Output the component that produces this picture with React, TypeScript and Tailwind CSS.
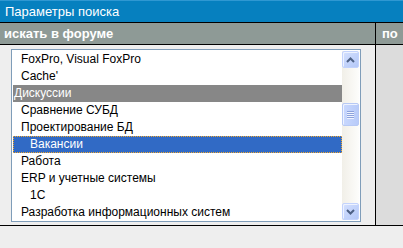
import React from "react";

type Item = { label: string; level: 0 | 1 | 2; kind?: "group" | "selected" };

const items: Item[] = [
  { label: "FoxPro, Visual FoxPro", level: 1 },
  { label: "Cache'", level: 1 },
  { label: "Дискуссии", level: 0, kind: "group" },
  { label: "Сравнение СУБД", level: 1 },
  { label: "Проектирование БД", level: 1 },
  { label: "Вакансии", level: 2, kind: "selected" },
  { label: "Работа", level: 1 },
  { label: "ERP и учетные системы", level: 1 },
  { label: "1C", level: 2 },
  { label: "Разработка информационных систем", level: 1 },
];

function ScrollButton({ dir }: { dir: "up" | "down" }) {
  return (
    <div className="h-[17px] w-full rounded-[2px] border border-[#c3d3fd] bg-gradient-to-br from-[#d4e0fe] to-[#b4c8f8] shadow-[inset_1px_1px_0_#eef3ff] flex items-center justify-center">
      <svg width="9" height="6" viewBox="0 0 9 6">
        {dir === "up" ? (
          <path d="M1 5 L4.5 1.5 L8 5" fill="none" stroke="#4d6185" strokeWidth="2" />
        ) : (
          <path d="M1 1 L4.5 4.5 L8 1" fill="none" stroke="#4d6185" strokeWidth="2" />
        )}
      </svg>
    </div>
  );
}

export default function App() {
  return (
    <div
      className="w-[403px] h-[248px] bg-[#eeeeee] overflow-hidden flex flex-col"
      style={{ fontFamily: '"Liberation Sans", Arial, sans-serif' }}
    >
      <div className="h-[22px] bg-[#0680bf] border-t border-[#2f98d2] text-white text-[13px] leading-[21px] pl-[5px]">
        Параметры поиска
      </div>
      <div className="flex border-y border-black h-[204px]">
        <div className="w-[376px] border-r border-black flex flex-col">
          <div className="h-[22px] bg-[#8e9a96] border-b border-black text-white font-bold text-[13px] leading-[21px] pl-[4px]">
            искать в форуме
          </div>
          <div className="flex-1 bg-[#eeeeee] pt-[4px] pl-[11px]">
            <div className="w-[350px] h-[173px] border border-[#7f9db9] bg-white p-[1px] flex">
              <div className="flex-1 overflow-hidden">
                {items.map((it, i) => {
                  const pad =
                    it.level === 0 ? "pl-[1px]" : it.level === 1 ? "pl-[8px]" : "pl-[17px]";
                  if (it.kind === "group") {
                    return (
                      <div
                        key={i}
                        className={`h-[17px] bg-[#878787] text-white text-[12px] leading-[17px] whitespace-nowrap ${pad}`}
                      >
                        {it.label}
                      </div>
                    );
                  }
                  if (it.kind === "selected") {
                    return (
                      <div
                        key={i}
                        className="h-[17px] bg-[#316ac5] border border-dotted border-[#f0a830] text-white text-[12px] leading-[15px] whitespace-nowrap pl-[16px]"
                      >
                        {it.label}
                      </div>
                    );
                  }
                  return (
                    <div
                      key={i}
                      className={`h-[17px] text-black text-[12px] leading-[17px] whitespace-nowrap ${pad}`}
                    >
                      {it.label}
                    </div>
                  );
                })}
              </div>
              <div className="w-[17px] h-full bg-gradient-to-r from-[#f1efe8] to-[#fdfdfb] flex flex-col items-center">
                <ScrollButton dir="up" />
                <div className="mt-[35px] h-[23px] w-full rounded-[2px] border border-[#b7c9f5] bg-gradient-to-r from-[#c9d8fe] to-[#b8cbf9] shadow-[inset_1px_1px_0_#eef3ff] flex flex-col items-center justify-center gap-[1px]">
                  <div className="w-[7px] h-[1px] bg-[#8ca2dd] shadow-[0_1px_0_#eef3ff]" />
                  <div className="w-[7px] h-[1px] bg-[#8ca2dd] shadow-[0_1px_0_#eef3ff]" />
                  <div className="w-[7px] h-[1px] bg-[#8ca2dd] shadow-[0_1px_0_#eef3ff]" />
                  <div className="w-[7px] h-[1px] bg-[#8ca2dd] shadow-[0_1px_0_#eef3ff]" />
                </div>
                <div className="flex-1" />
                <ScrollButton dir="down" />
              </div>
            </div>
          </div>
        </div>
        <div className="flex-1 flex flex-col bg-[#dcdcdc]">
          <div className="h-[22px] bg-[#8e9a96] border-b border-black text-white font-bold text-[13px] leading-[21px] pl-[6px] whitespace-nowrap overflow-hidden">
            по
          </div>
          <div className="flex-1" />
        </div>
      </div>
    </div>
  );
}
